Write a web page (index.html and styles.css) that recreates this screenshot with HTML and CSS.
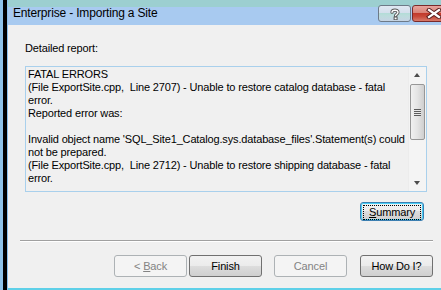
FILE: index.html
```html
<!DOCTYPE html>
<html lang="en">
<head>
  <meta charset="UTF-8">
  <title>Enterprise - Importing a Site</title>
  <link rel="stylesheet" href="styles.css">
</head>
<body>

  <div class="desktop">
    <div class="edge"></div>
    <div class="edge-dark"></div>

    <div class="window">
      <div class="titlebar">
        <span class="title">Enterprise - Importing a Site</span>
        <div class="caption-btns">
          <div class="cap-btn help">
            <svg width="12" height="12" viewBox="0 0 12 12">
              <path d="M3 4.2 C3 1.6 9 1.4 9 4.3 C9 6.2 6.6 6.2 6.6 7.8" fill="none" stroke="#555" stroke-width="3.2" stroke-linecap="round"/>
              <path d="M3 4.2 C3 1.6 9 1.4 9 4.3 C9 6.2 6.6 6.2 6.6 7.8" fill="none" stroke="#fff" stroke-width="1.4" stroke-linecap="round"/>
              <rect x="5.1" y="9" width="3" height="2.8" fill="#fff" stroke="#555" stroke-width="1"/>
            </svg>
          </div>
          <div class="cap-btn close">
            <svg width="16" height="11" viewBox="0 0 16 11">
              <path d="M3 2 L13 9 M13 2 L3 9" stroke="#5a2020" stroke-width="4.2" stroke-linecap="square"/>
              <path d="M3 2 L13 9 M13 2 L3 9" stroke="#fff" stroke-width="2.2" stroke-linecap="square"/>
            </svg>
          </div>
        </div>
      </div>

      <div class="content">
        <div class="label">Detailed report:</div>

        <div class="report">
          <div class="report-text">
            <div>FATAL ERRORS</div>
            <div>(File ExportSite.cpp,  Line 2707) - Unable to restore catalog database - fatal</div>
            <div>error.</div>
            <div>Reported error was:</div>
            <div>&nbsp;</div>
            <div>Invalid object name 'SQL_Site1_Catalog.sys.database_files'.Statement(s) could</div>
            <div>not be prepared.</div>
            <div>(File ExportSite.cpp,  Line 2712) - Unable to restore shipping database - fatal</div>
            <div>error.</div>
          </div>
          <div class="scrollbar">
            <div class="arrow up"></div>
            <div class="thumb"><div class="grip"></div></div>
            <div class="track"></div>
            <div class="arrow down"></div>
          </div>
        </div>

        <div class="summary-row">
          <button class="btn summary"><span class="focus"><u>S</u>ummary</span></button>
        </div>

        <div class="sep"></div>

        <div class="nav-row">
          <button class="btn disabled">&lt; <u>B</u>ack</button>
          <button class="btn finish">Finish</button>
          <button class="btn disabled cancel">Cancel</button>
          <button class="btn howdoi">How Do I?</button>
        </div>
      </div>
    </div>
  </div>

</body>
</html>
```

FILE: styles.css
```css
html, body {
  margin: 0;
  padding: 0;
  width: 441px;
  height: 290px;
  overflow: hidden;
  background-color: #000;
}
.desktop {
  display: flex;
  height: 290px;
}
.edge {
  flex: none;
  width: 3px;
  background-color: #8fc3ea;
}
.edge-dark {
  flex: none;
  width: 4px;
  background-color: #000;
}
.window {
  flex: 1;
  min-width: 0;
  display: flex;
  flex-direction: column;
  border-left: 1px solid #8cc0ec;
  font-family: "Liberation Sans", Arial, sans-serif;
  overflow: hidden;
}
.titlebar {
  height: 25px;
  display: flex;
  align-items: flex-start;
  padding-left: 5px;
  overflow: hidden;
  background: linear-gradient(#9ccfd0 0, #9ccfd0 7px, #a8caf0 7px, #a8caf0 100%);
}
.title {
  font-size: 12px;
  line-height: 14px;
  letter-spacing: -0.17px;
  margin-top: 6px;
  color: #000;
}
.caption-btns {
  flex: none;
  display: flex;
  gap: 1px;
  margin-left: auto;
  margin-right: -14px;
  margin-top: 5px;
}
.cap-btn {
  box-sizing: border-box;
  height: 17px;
  border: 1px solid #6d7a88;
  border-radius: 3px;
  display: flex;
  align-items: center;
  justify-content: center;
}
.help {
  width: 33px;
  background: linear-gradient(#e0e8f2 0, #d4dfec 45%, #b4dcd8 50%, #bcdcdc 65%, #c6d4e4 100%);
}
.close {
  width: 43px;
  border-color: #7a2a2a;
  background: linear-gradient(#e8a49c 0, #d88478 45%, #c23a2c 50%, #c84a3a 70%, #d87a6a 100%);
}
.content {
  flex: 1;
  background-color: #f0f0f0;
  border-bottom: 2px solid #5ed0e8;
  padding: 17px 0 0 17px;
  font-size: 11px;
  line-height: 13px;
  letter-spacing: -0.15px;
  color: #000;
}
.label {
  height: 13px;
}
.report {
  margin-top: 11px;
  width: 400px;
  height: 124px;
  border: 1px solid #a9d0ec;
  display: flex;
}
.report-text {
  flex: 1;
  padding: 1px 0 0 2px;
  overflow: hidden;
}
.report-text div {
  white-space: pre;
}
.scrollbar {
  width: 17px;
  background-color: #f4f4f4;
  border-left: 1px solid #ececec;
  display: flex;
  flex-direction: column;
}
.arrow {
  height: 17px;
  position: relative;
}
.arrow::after {
  content: "";
  position: absolute;
  left: 5px;
  border-left: 3.5px solid transparent;
  border-right: 3.5px solid transparent;
}
.arrow.up::after {
  top: 6px;
  border-bottom: 4px solid #4d4d4d;
}
.arrow.down::after {
  top: 7px;
  border-top: 4px solid #4d4d4d;
}
.thumb {
  height: 54px;
  margin: 0 1px;
  border: 1px solid #979797;
  border-radius: 2px;
  background: linear-gradient(to right, #f1f1f1, #e4e4e4 50%, #cfcfcf);
  display: flex;
  align-items: center;
  justify-content: center;
}
.grip {
  width: 7px;
  height: 7px;
  background: repeating-linear-gradient(#5c5c5c 0, #5c5c5c 1px, #e8e8e8 1px, #e8e8e8 2px);
}
.track {
  flex: 1;
}
.summary-row {
  margin-top: 10px;
  padding-left: 335px;
  height: 19px;
}
.btn {
  font-family: "Liberation Sans", Arial, sans-serif;
  font-size: 11px;
  line-height: 13px;
  letter-spacing: -0.15px;
  color: #000;
  padding: 0;
  width: 73px;
  height: 22px;
  border: 1px solid #707070;
  border-radius: 3px;
  background: linear-gradient(#f2f2f2 0, #ebebeb 50%, #dddddd 50%, #cfcfcf 100%);
}
.btn u {
  text-decoration-thickness: 1px;
}
.summary {
  width: 64px;
  height: 19px;
  border: 1px solid #3c7fb1;
  box-shadow: inset 0 0 0 1px #48d0f8;
  padding: 2px;
}
.focus {
  display: block;
  height: 13px;
  border: 1px dotted #000;
}
.sep {
  margin: 19px 0 0 -5px;
  width: 413px;
  height: 1px;
  background-color: #a0a0a0;
  border-bottom: 1px solid #ffffff;
}
.nav-row {
  display: flex;
  margin-top: 13px;
  padding-left: 89px;
}
.finish {
  margin-left: 2px;
}
.cancel {
  margin-left: 12px;
}
.howdoi {
  margin-left: 13px;
}
.btn.disabled {
  color: #838383;
  border-color: #adb2b5;
  background: #f4f4f4;
}
```
